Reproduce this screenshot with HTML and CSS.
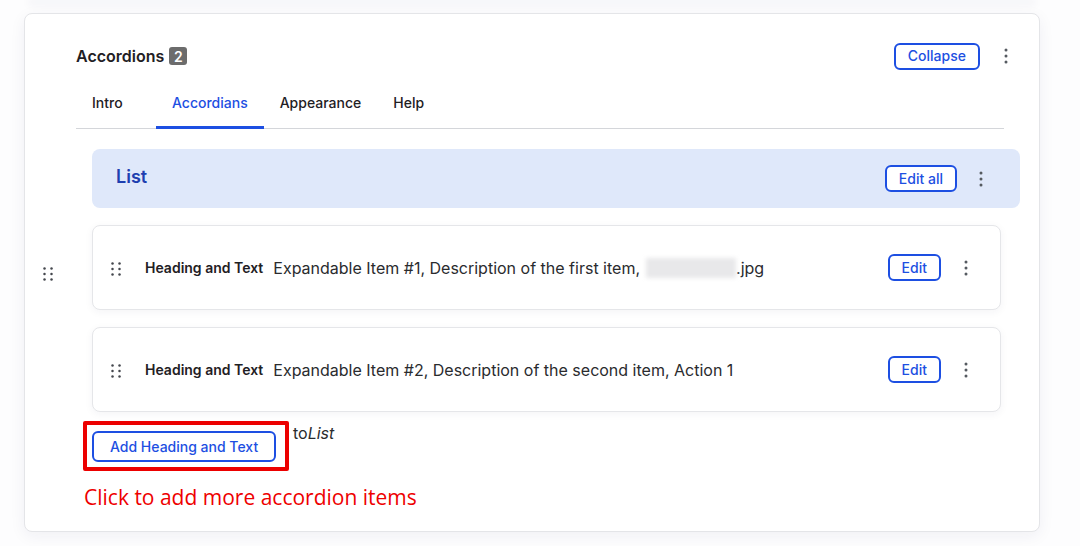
FILE: index.html
```html
<!DOCTYPE html>
<html>
<head>
<meta charset="utf-8">
<link rel="stylesheet" href="styles.css">
</head>
<body>
<div class="page">
  <div class="prev-card"></div>
  <section class="card">
    <header class="card-head">
      <h2 class="title">Accordions <span class="badge">2</span></h2>
      <div class="actions">
        <button class="btn">Collapse</button>
        <span class="kebab"><svg width="4" height="16" viewBox="0 0 4 16"><circle cx="2" cy="2" r="1.5"/><circle cx="2" cy="8" r="1.5"/><circle cx="2" cy="14" r="1.5"/></svg></span>
      </div>
    </header>
    <nav class="tabs">
      <span class="tab tab-first">Intro</span>
      <span class="tab active">Accordians</span>
      <span class="tab">Appearance</span>
      <span class="tab">Help</span>
    </nav>
    <div class="body">
      <div class="outer-handle">
        <svg width="10" height="14" viewBox="0 0 10 14"><circle cx="1.5" cy="1.5" r="1.25"/><circle cx="8.5" cy="1.5" r="1.25"/><circle cx="1.5" cy="7" r="1.25"/><circle cx="8.5" cy="7" r="1.25"/><circle cx="1.5" cy="12.5" r="1.25"/><circle cx="8.5" cy="12.5" r="1.25"/></svg>
      </div>
      <div class="content">
        <div class="list-head">
          <span class="list-title">List</span>
          <div class="actions">
            <button class="btn">Edit all</button>
            <span class="kebab"><svg width="4" height="16" viewBox="0 0 4 16"><circle cx="2" cy="2" r="1.5"/><circle cx="2" cy="8" r="1.5"/><circle cx="2" cy="14" r="1.5"/></svg></span>
          </div>
        </div>
        <div class="item">
          <span class="handle"><svg width="10" height="14" viewBox="0 0 10 14"><circle cx="1.5" cy="1.5" r="1.25"/><circle cx="8.5" cy="1.5" r="1.25"/><circle cx="1.5" cy="7" r="1.25"/><circle cx="8.5" cy="7" r="1.25"/><circle cx="1.5" cy="12.5" r="1.25"/><circle cx="8.5" cy="12.5" r="1.25"/></svg></span>
          <span class="item-type">Heading and Text</span>
          <span class="item-desc">Expandable Item #1, Description of the first item,<span class="blur"></span>.jpg</span>
          <div class="actions item-actions">
            <button class="btn btn-sm">Edit</button>
            <span class="kebab"><svg width="4" height="16" viewBox="0 0 4 16"><circle cx="2" cy="2" r="1.5"/><circle cx="2" cy="8" r="1.5"/><circle cx="2" cy="14" r="1.5"/></svg></span>
          </div>
        </div>
        <div class="item">
          <span class="handle"><svg width="10" height="14" viewBox="0 0 10 14"><circle cx="1.5" cy="1.5" r="1.25"/><circle cx="8.5" cy="1.5" r="1.25"/><circle cx="1.5" cy="7" r="1.25"/><circle cx="8.5" cy="7" r="1.25"/><circle cx="1.5" cy="12.5" r="1.25"/><circle cx="8.5" cy="12.5" r="1.25"/></svg></span>
          <span class="item-type">Heading and Text</span>
          <span class="item-desc">Expandable Item #2, Description of the second item, Action 1</span>
          <div class="actions item-actions">
            <button class="btn btn-sm">Edit</button>
            <span class="kebab"><svg width="4" height="16" viewBox="0 0 4 16"><circle cx="2" cy="2" r="1.5"/><circle cx="2" cy="8" r="1.5"/><circle cx="2" cy="14" r="1.5"/></svg></span>
          </div>
        </div>
        <div class="add-row">
          <div class="highlight">
            <button class="btn btn-add">Add Heading and Text</button>
          </div>
          <span class="to-list">to<em>List</em></span>
        </div>
      </div>
    </div>
    <p class="note">Click to add more accordion items</p>
  </section>
</div>
</body>
</html>
```

FILE: styles.css
```css
* { box-sizing: border-box; }
html, body { margin: 0; padding: 0; background: #fdfdfe; }
body { font-family: Inter, "Noto Sans", sans-serif; color: #1f2024; }

.page { padding: 0 40px 0 24px; height: 546px; overflow: hidden; }

.prev-card {
  height: 0;
  margin: 0 6px 13px 6px;
  box-shadow: 0 2px 8px 2px rgba(30, 40, 80, 0.07);
}

.card {
  width: 1016px;
  height: 519px;
  background: #fff;
  border: 1px solid #e4e5e8;
  border-radius: 8px;
  box-shadow: 0 4px 16px rgba(30, 40, 80, 0.06);
}

.card-head {
  display: flex;
  align-items: center;
  justify-content: space-between;
  padding: 28px 31px 0 51px;
  height: 56px;
}
.title {
  margin: 0;
  font-size: 16px;
  font-weight: 600;
  display: flex;
  align-items: center;
  gap: 5px;
}
.badge {
  display: inline-flex;
  align-items: center;
  justify-content: center;
  width: 18px;
  height: 18px;
  background: #6c6c6c;
  color: #fff;
  border-radius: 3px;
  font-size: 14px;
  font-weight: 600;
}

.actions { display: flex; align-items: center; gap: 24px; }
.kebab { display: inline-flex; width: 4px; fill: #555a60; }

.btn {
  font-family: Inter, "Noto Sans", sans-serif;
  font-size: 14px;
  font-weight: 500;
  color: #1d4fe2;
  background: #fff;
  border: 2px solid #1d4fe2;
  border-radius: 6px;
  height: 27px;
  padding: 0 12px;
  line-height: 1;
  white-space: nowrap;
}

.tabs {
  display: flex;
  margin: 10px 35px 0 51px;
  border-bottom: 1px solid #d4d6da;
  height: 49px;
}
.tab {
  font-size: 14px;
  font-weight: 500;
  padding: 14px 16px 0;
  height: 48px;
  color: #1f2024;
}
.tab-first { width: 80px; }
.tab.active {
  color: #1d4fe2;
  border-bottom: 3px solid #1d4fe2;
  height: 49px;
  margin-bottom: -1px;
}

.body {
  display: flex;
  padding-top: 20px;
}
.outer-handle {
  width: 67px;
  padding: 116px 0 0 18px;
  fill: #44474d;
}
.content { flex: 1; margin-right: 19px; }

.list-head {
  display: flex;
  align-items: center;
  justify-content: space-between;
  height: 59px;
  background: #dfe8fa;
  border-radius: 8px;
  padding: 0 37px 0 24px;
  margin-bottom: 17px;
}
.list-title { font-size: 18px; font-weight: 600; color: #1e3fb0; padding-bottom: 4px; }
.list-head .actions { gap: 22px; }

.item {
  display: flex;
  align-items: center;
  width: 909px;
  height: 85px;
  border: 1px solid #e5e6e9;
  border-radius: 8px;
  background: #fff;
  box-shadow: 0 2px 8px rgba(30, 40, 80, 0.05);
  padding: 0 32px 0 18px;
  margin-bottom: 17px;
}
.handle { display: inline-flex; fill: #44474d; margin-right: 24px; margin-top: 2px; }
.item-type { font-size: 14px; font-weight: 600; margin-right: 10px; }
.item-desc { font-size: 16px; color: #2a2b2e; flex: 1; display: inline-flex; align-items: center; }
.blur {
  display: inline-block;
  width: 90px;
  height: 20px;
  margin-left: 6px;
  background: #e8e8ea;
  filter: blur(2px);
}
.item-actions { gap: 23px; }

.add-row {
  display: flex;
  align-items: flex-start;
  margin-top: -8px;
  margin-left: -9px;
}
.highlight {
  border: 4px solid #ec0000;
  padding: 6px 9px 5px 5px;
  border-radius: 2px;
}
.btn-add { height: 31px; padding: 0 16px; font-size: 14px; border-radius: 6px; width: 184px; }
.to-list { font-size: 16px; color: #2a2b2e; margin-left: 4px; margin-top: 2px; }
.to-list em { font-style: italic; }

.note {
  margin: 12px 0 0 59px;
  font-family: "Open Sans", "Noto Sans", sans-serif;
  font-size: 21px;
  color: #ee0000;
}
```
